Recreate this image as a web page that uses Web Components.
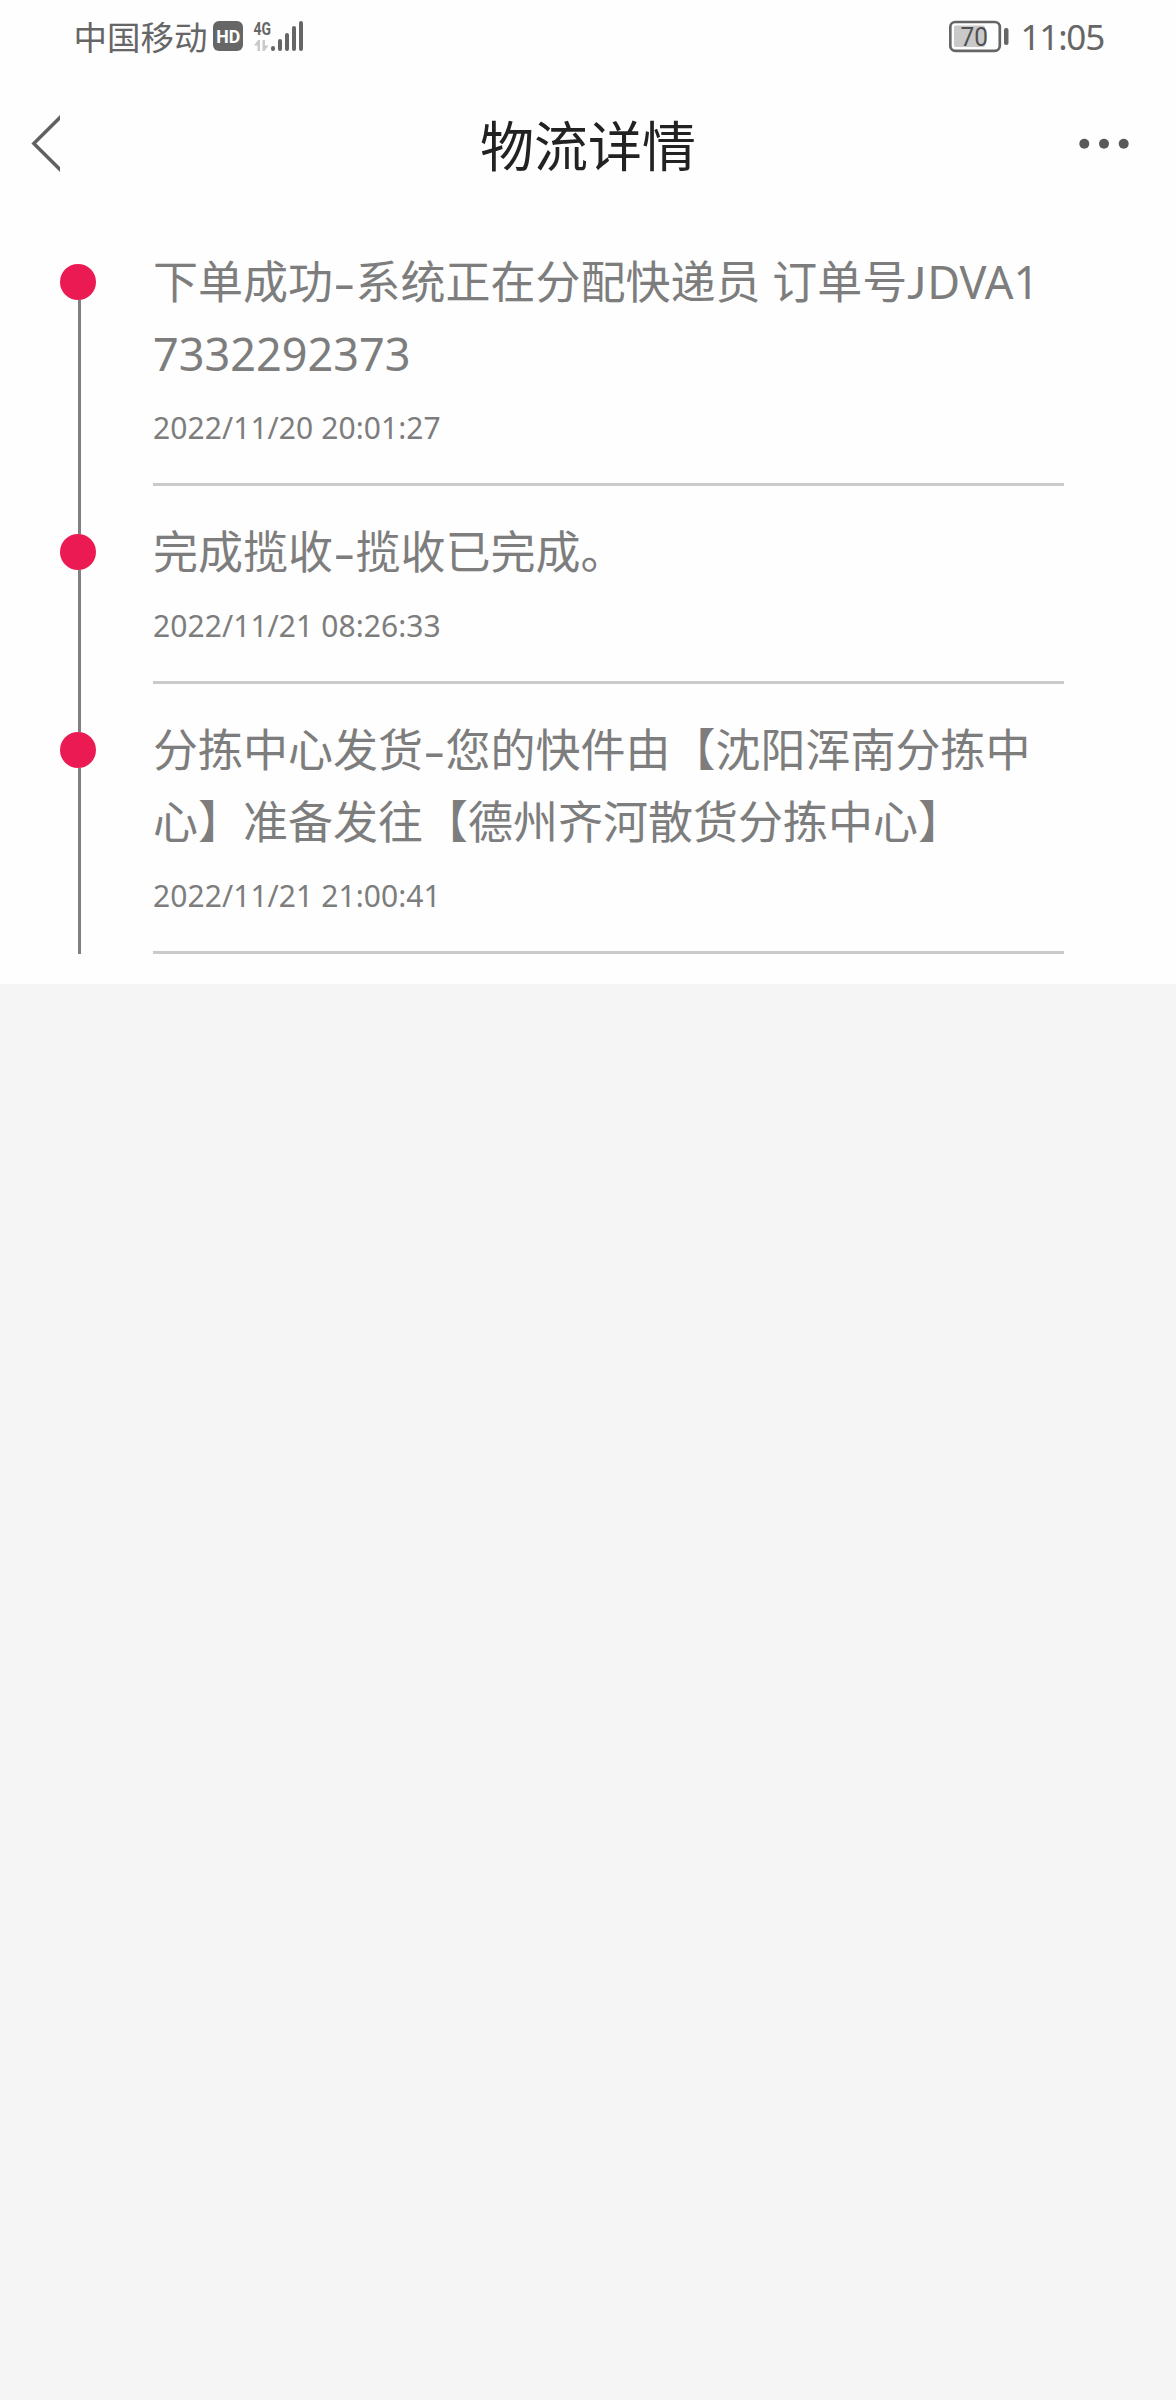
<!DOCTYPE html>
<html lang="zh-CN">
<head>
<meta charset="utf-8">
<title>物流详情</title>
<style>
html,body{margin:0;background:#f5f5f5}
body{font-family:"Noto Sans","Noto Sans CJK SC",sans-serif;color:#7d7d7d}
</style>
</head>
<body>
<logistics-page></logistics-page>
<script>
const define=(name,html)=>customElements.define(name,class extends HTMLElement{
  constructor(){super();this.attachShadow({mode:'open'}).innerHTML=html}
});

define('status-bar',`<style>
:host{display:flex;justify-content:space-between;height:72px;padding:0 72px 0 73.5px;box-sizing:border-box;color:#666}
.side{display:flex;align-items:center}
.carrier{font:400 33.5px/72px "Noto Sans CJK SC",sans-serif;white-space:nowrap;width:139.5px}
svg{display:block}
.clock{font-size:35px;font-weight:400;line-height:72px;margin-left:12px;margin-top:2px;white-space:nowrap;letter-spacing:-1.2px}
text{font-family:Roboto,sans-serif}
</style>
<div class="side"><span class="carrier">中国移动</span>
<svg width="92" height="72" viewBox="213 0 92 72" fill="#666">
<rect x="213" y="21" width="30" height="30" rx="6"/>
<text x="228.2" y="42.8" font-size="19" font-weight="700" fill="#fff" text-anchor="middle" textLength="24" lengthAdjust="spacingAndGlyphs">HD</text>
<text x="253.500" y="34.5" font-size="18.5" font-weight="700" textLength="17.5" lengthAdjust="spacingAndGlyphs">4G</text>
<path fill="#c9c9c9" d="M254 45.5L258.2 40H260V51H257.5V45.500ZM262.500 40H265V45.500H268.500L264.400 51H262.500Z"/>
<rect x="271" y="46" width="4" height="5" rx="2"/>
<rect x="278" y="39" width="4" height="12" rx="2"/>
<rect x="285" y="33" width="4" height="18" rx="2"/>
<rect x="292" y="26" width="4" height="25" rx="2"/>
<rect x="299" y="21" width="4" height="30" rx="2"/>
</svg></div>
<div class="side">
<svg width="60" height="72" viewBox="949 0 60 72" fill="#666">
<rect x="950.300" y="22" width="49.500" height="28.800" rx="5" fill="none" stroke="#666" stroke-width="2.700"/>
<rect x="954" y="25.500" width="31" height="21.500" rx="2" fill="#c9c9c9"/>
<rect x="1004" y="28" width="4.500" height="17" rx="2"/>
<text x="960.500" y="45.500" font-size="26" fill="#505050" textLength="27.500" lengthAdjust="spacingAndGlyphs">70</text>
</svg><span class="clock">11:05</span></div>`);

define('title-bar',`<style>
:host{display:grid;grid-template-columns:60px 1fr 60px;align-items:center;height:144px}
svg{display:block}
h1{margin:-1px 0 0;font:400 54px/80px "Noto Sans CJK SC",sans-serif;color:#222;text-align:center}
.more{justify-self:end;margin-right:46px}
</style>
<svg width="60" height="60" viewBox="0 113.500 60 60"><path d="M62 115L33.800 143L62 171" fill="none" stroke="#606060" stroke-width="3.400"/></svg>
<h1><slot></slot></h1>
<svg class="more" width="52" height="12" viewBox="1078 138 52 12" fill="#595959"><circle cx="1084.300" cy="143.800" r="5"/><circle cx="1104" cy="143.800" r="5"/><circle cx="1123.700" cy="143.800" r="5"/></svg>`);

define('track-event',`<style>
:host{display:grid;grid-template-columns:153px 911px}
.rail{display:flex;flex-direction:column;align-items:center;padding-left:6px}
.seg{width:3px;background:#808080}
.top{height:48px}
.rest{flex:1}
.dot{width:36px;height:36px;border-radius:50%;background:#eb1a52;margin-right:3px}
:host([first]) .top{background:none}
.body{border-bottom:3px solid #cacaca;padding-top:30px;box-sizing:border-box}
.msg{font-size:45px;line-height:72px}
.time{display:block;font-size:30px;line-height:42px;padding:17px 0 34px;letter-spacing:.07px}
</style>
<div class="rail"><div class="seg top"></div><div class="dot"></div><div class="seg rest"></div></div>
<div class="body"><div class="msg"><slot></slot></div><slot class="time" name="time"></slot></div>`);

define('track-line',`<style>
:host{display:block;height:72px;white-space:nowrap}
</style><slot></slot>`);

// Hyphen drawn at a wider advance than the text face gives it.
define('wide-hyphen',`<style>
:host{display:inline-block;width:22.5px;text-align:center}
span{display:inline-block;transform:scaleX(1.5)}
</style><span>-</span>`);

define('base-j',`<style>
:host{display:inline-block;width:20px;line-height:1}
span{font-family:Lato,sans-serif;font-size:45px}
</style><span>J</span>`);

define('logistics-page',`<style>
:host{display:block;width:1176px;background:#fefefe;padding-bottom:30px}
</style>
<status-bar></status-bar>
<title-bar>物流详情</title-bar>
<track-event first><track-line>下单成功<wide-hyphen></wide-hyphen>系统正在分配快递员 订单号<base-j></base-j>DVA1</track-line><track-line>7332292373</track-line><span slot="time">2022/11/20 20:01:27</span></track-event>
<track-event><track-line>完成揽收<wide-hyphen></wide-hyphen>揽收已完成。</track-line><span slot="time">2022/11/21 08:26:33</span></track-event>
<track-event><track-line>分拣中心发货<wide-hyphen></wide-hyphen>您的快件由【沈阳浑南分拣中</track-line><track-line>心】准备发往【德州齐河散货分拣中心】</track-line><span slot="time">2022/11/21 21:00:41</span></track-event>`);
</script>
</body>
</html>
